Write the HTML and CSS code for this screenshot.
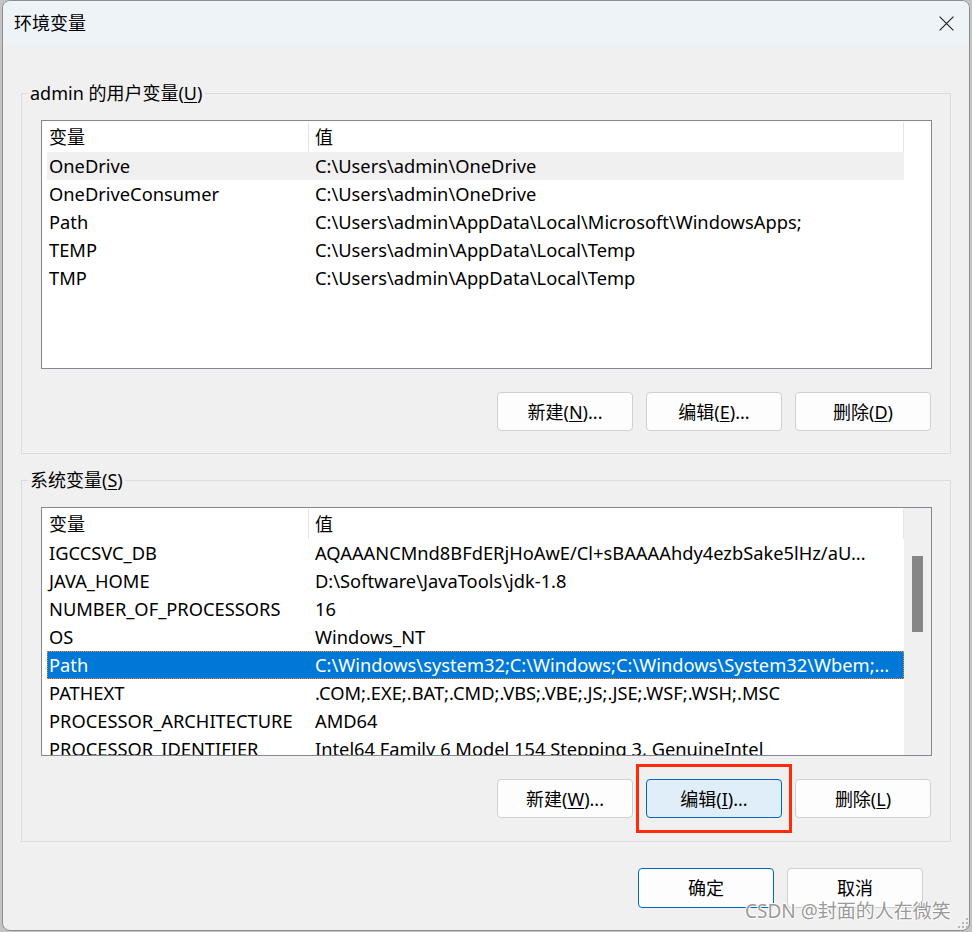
FILE: index.html
```html
<!DOCTYPE html>
<html lang="zh-CN">
<head>
<meta charset="utf-8">
<title>环境变量</title>
<link rel="stylesheet" href="styles.css">
</head>
<body>
<div class="window">
  <div class="titlebar">
    <span class="title">环境变量</span>
    <svg class="close" width="15" height="15" viewBox="0 0 15 15"><path d="M0.6 0.6 L14.4 14.4 M14.4 0.6 L0.6 14.4" stroke="#1b1b1b" stroke-width="1.1" fill="none"/></svg>
  </div>
  <div class="content">
    <fieldset class="group">
      <legend>admin 的用户变量(<u>U</u>)</legend>
      <div class="group-body">
        <div class="list">
          <div class="list-main">
            <div class="lhead"><div class="hc1">变量</div><div class="hc2">值</div></div>
            <div class="rows">
              <div class="row hover"><div class="c1">OneDrive</div><div class="c2">C:\Users\admin\OneDrive</div></div>
              <div class="row"><div class="c1">OneDriveConsumer</div><div class="c2">C:\Users\admin\OneDrive</div></div>
              <div class="row"><div class="c1">Path</div><div class="c2">C:\Users\admin\AppData\Local\Microsoft\WindowsApps;</div></div>
              <div class="row"><div class="c1">TEMP</div><div class="c2">C:\Users\admin\AppData\Local\Temp</div></div>
              <div class="row"><div class="c1">TMP</div><div class="c2">C:\Users\admin\AppData\Local\Temp</div></div>
            </div>
          </div>
          <div class="vside"></div>
        </div>
        <div class="btns">
          <button class="btn">新建(<u>N</u>)...</button>
          <button class="btn">编辑(<u>E</u>)...</button>
          <button class="btn">删除(<u>D</u>)</button>
        </div>
      </div>
    </fieldset>

    <fieldset class="group second">
      <legend>系统变量(<u>S</u>)</legend>
      <div class="group-body">
        <div class="list">
          <div class="list-main">
            <div class="lhead"><div class="hc1">变量</div><div class="hc2">值</div></div>
            <div class="rows">
              <div class="row"><div class="c1">IGCCSVC_DB</div><div class="c2">AQAAANCMnd8BFdERjHoAwE/Cl+sBAAAAhdy4ezbSake5lHz/aU...</div></div>
              <div class="row"><div class="c1">JAVA_HOME</div><div class="c2">D:\Software\JavaTools\jdk-1.8</div></div>
              <div class="row"><div class="c1">NUMBER_OF_PROCESSORS</div><div class="c2">16</div></div>
              <div class="row"><div class="c1">OS</div><div class="c2">Windows_NT</div></div>
              <div class="row selected"><div class="c1">Path</div><div class="c2">C:\Windows\system32;C:\Windows;C:\Windows\System32\Wbem;...</div></div>
              <div class="row"><div class="c1">PATHEXT</div><div class="c2">.COM;.EXE;.BAT;.CMD;.VBS;.VBE;.JS;.JSE;.WSF;.WSH;.MSC</div></div>
              <div class="row"><div class="c1">PROCESSOR_ARCHITECTURE</div><div class="c2">AMD64</div></div>
              <div class="row"><div class="c1">PROCESSOR_IDENTIFIER</div><div class="c2">Intel64 Family 6 Model 154 Stepping 3, GenuineIntel</div></div>
            </div>
          </div>
          <div class="vside track"><div class="thumb"></div></div>
        </div>
        <div class="btns">
          <button class="btn">新建(<u>W</u>)...</button>
          <button class="btn hot">编辑(<u>I</u>)...<span class="mark"></span></button>
          <button class="btn">删除(<u>L</u>)</button>
        </div>
      </div>
    </fieldset>

    <div class="footer">
      <button class="btn default">确定</button>
      <button class="btn">取消</button>
    </div>
  </div>
  <div class="watermark">CSDN @封面的人在微笑</div>
  <svg class="grip" width="12" height="12" viewBox="0 0 12 12">
    <rect x="9" y="1" width="2" height="2" fill="#b9b9b9"/>
    <rect x="5" y="5" width="2" height="2" fill="#b9b9b9"/>
    <rect x="9" y="5" width="2" height="2" fill="#b9b9b9"/>
    <rect x="1" y="9" width="2" height="2" fill="#b9b9b9"/>
    <rect x="5" y="9" width="2" height="2" fill="#b9b9b9"/>
    <rect x="9" y="9" width="2" height="2" fill="#b9b9b9"/>
  </svg>
</div>
</body>
</html>
```

FILE: styles.css
```css
* { box-sizing: border-box; }
html, body { margin: 0; padding: 0; }
body {
  width: 972px;
  height: 932px;
  overflow: hidden;
  background: #c4c4c4;
  font-family: "Noto Sans", "Noto Sans CJK SC", sans-serif;
  font-size: 18px;
  color: #000;
}
.window {
  position: relative;
  margin-left: 2px;
  width: 968px;
  height: 931px;
  border: 1px solid #8e8e8e;
  border-radius: 8px;
  background: #f0f0f0;
  overflow: hidden;
}
.titlebar {
  height: 44px;
  background: #eef3f8;
  display: flex;
  align-items: center;
  padding-left: 11px;
  padding-right: 15px;
}
.title { font-size: 18px; line-height: 24px; }
.close { margin-left: auto; display: block; }
.content { padding: 0 18px; }
.group {
  margin: 38px 0 0 0;
  padding: 0;
  border: 1px solid #dcdcdc;
  min-width: 0;
}
.group.second { margin-top: 16px; }
.group legend {
  margin-left: 6px;
  padding: 0 2px;
  line-height: 20px;
  font-size: 18px;
}
.group-body { padding: 17px 18px 22px 19px; }
.group.second .group-body { padding-bottom: 23px; }
u { text-decoration: underline; text-decoration-thickness: 1px; text-underline-offset: 2px; }

.list {
  height: 249px;
  border: 1px solid #828790;
  background: #fff;
  display: flex;
  overflow: hidden;
}
.list-main { width: 862px; flex: none; overflow: hidden; }
.lhead { height: 31px; display: flex; padding-top: 1px; }
.hc1 { width: 267px; padding-left: 7px; border-right: 1px solid #e5e5e5; line-height: 30px; }
.hc2 { flex: 1; padding-left: 6px; border-right: 1px solid #e5e5e5; line-height: 30px; }
.rows { margin-left: 5px; width: 857px; font-size: 18.3px; }
.row { height: 28px; display: flex; line-height: 28px; }
.row.hover { background: #f0f0f0; }
.row.selected { background: #0078d7; color: #fff; outline: 1px dotted #f0892c; outline-offset: -1px; }
.c1 { width: 261px; padding-left: 2px; white-space: nowrap; overflow: hidden; }
.c2 { flex: 1; padding-left: 7px; padding-right: 12px; white-space: nowrap; overflow: hidden; text-overflow: ellipsis; }
.vside { width: 27px; flex: none; }
.vside.track { background: #f0f0f0; padding-top: 48px; }
.thumb { width: 11px; height: 76px; margin-left: 8px; background: #868686; }

.btns { display: flex; justify-content: flex-end; gap: 13px; margin-top: 23px; padding-right: 1px; }
.btn {
  width: 136px;
  height: 39px;
  padding: 0;
  border: 1px solid #d0d0d0;
  border-radius: 4px;
  background: #fdfdfd;
  font-family: "Noto Sans", "Noto Sans CJK SC", sans-serif;
  font-size: 18px;
  color: #000;
  line-height: 36px;
}
.btn.hot { position: relative; background: #e0eef9; border-color: #0067c0; }
.btn.default { border-color: #0067c0; background: #fdfdfd; }
.mark {
  position: absolute;
  left: -11px;
  top: -16px;
  width: 156px;
  height: 69px;
  border: 3px solid #ff2a0a;
}
.footer { display: flex; justify-content: flex-end; gap: 13px; margin-top: 26px; padding-right: 28px; }
.footer .btn { height: 40px; }

.watermark {
  position: absolute;
  left: 742px;
  top: 898px;
  font-size: 19px;
  line-height: 24px;
  color: #9a9a9a;
  white-space: nowrap;
  text-shadow: 1px 0 0 #fff, -1px 0 0 #fff, 0 1px 0 #fff, 0 -1px 0 #fff;
}
.grip { position: absolute; left: 954px; top: 916px; }
```
